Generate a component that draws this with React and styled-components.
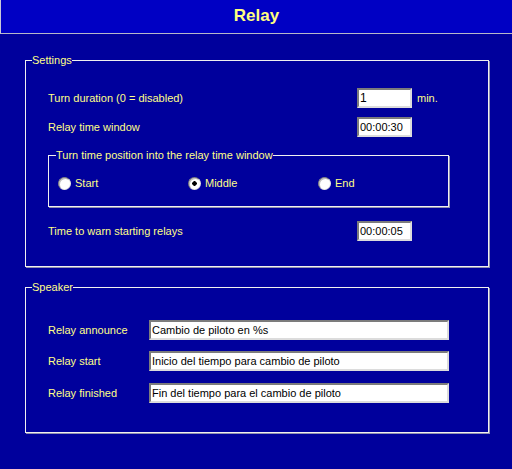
import React from 'react'
import styled, { createGlobalStyle } from 'styled-components'

const GlobalStyle = createGlobalStyle`
    html, body {
        margin: 0;
        padding: 0;
        background: #00009c;
    }
    * {
        box-sizing: border-box;
    }
`

const Page = styled.div`
    width: 512px;
    height: 469px;
    background: #00009c;
    font-family: "Liberation Sans", Arial, sans-serif;
    font-size: 11px;
    color: #ffff88;
    overflow: hidden;
`

const Header = styled.div`
    height: 34px;
    background: #0000c4;
    border-left: 1px solid #c8c8d8;
    border-bottom: 1px solid #b8b8c8;
    display: flex;
    justify-content: center;
    align-items: center;
    padding-bottom: 2px;

    color: #ffff80;
    font-size: 17px;
    font-weight: bold;
`

const Body = styled.div`
    padding: 20px 23px 0 25px;
`

const Group = styled.fieldset`
    margin: ${props => props.top || 0}px 0 0 0;
    padding: ${props => props.pad || '0'};
    width: ${props => props.width ? `${props.width}px` : 'auto'};
    border: 1px solid #f0f0f0;
    box-shadow: 1px 1px 0 #9090b0;
    min-width: 0;
`

const Legend = styled.legend`
    margin-left: ${props => props.offset || 0}px;
    padding: 0;
    font-size: 11px;
    line-height: 13px;
    color: #ffff88;
`

const Row = styled.div`
    display: grid;
    grid-template-columns: ${props => props.label}px ${props => props.field}px auto;
    align-items: center;
    column-gap: 5px;
    margin-top: ${props => props.top || 0}px;
`

const Label = styled.span`
    line-height: 13px;
    padding-top: 1px;
`

const TextBox = styled.div`
    height: 20px;
    background: #fff;
    border-style: solid;
    border-width: 2px;
    border-color: #7c7c7c #dcdcdc #dcdcdc #7c7c7c;
    padding: 0 1px;
    color: #000;
    font-size: ${props => props.big ? 12 : 11}px;
    line-height: 16px;
    white-space: nowrap;
    overflow: hidden;
    grid-column: 2;
`

const Radios = styled.div`
    display: grid;
    grid-template-columns: 130px 130px 130px;
`

const RadioItem = styled.label`
    display: flex;
    align-items: center;
    gap: 4px;
    line-height: 13px;
`

const RadioDot = styled.span`
    width: 13px;
    height: 13px;
    border-radius: 50%;
    border-style: solid;
    border-width: 1px;
    border-color: #808080 #e4e4e4 #e4e4e4 #808080;
    background: ${props => props.checked
        ? 'radial-gradient(circle, #000 0 2px, #fff 2.5px)'
        : '#fff'};
    box-shadow: inset 1px 1px 0 #c0c0c0;
`

const Radio = ({ checked, children }) => (
    <RadioItem>
        <RadioDot checked={checked} />
        {children}
    </RadioItem>
)

export default function App() {
    return (
        <Page>
            <GlobalStyle />
            <Header>Relay</Header>
            <Body>
                <Group pad="21px 22px 25px 22px">
                    <Legend offset={-16}>Settings</Legend>
                    <Row label={304} field={55}>
                        <Label>Turn duration (0 = disabled)</Label>
                        <TextBox big>1</TextBox>
                        <Label>min.</Label>
                    </Row>
                    <Row label={304} field={55} top={9}>
                        <Label>Relay time window</Label>
                        <TextBox>00:00:30</TextBox>
                    </Row>
                    <Group top={12} pad="15px 8px 16px 9px" width={401}>
                        <Legend offset={-2}>Turn time position into the relay time window</Legend>
                        <Radios>
                            <Radio>Start</Radio>
                            <Radio checked>Middle</Radio>
                            <Radio>End</Radio>
                        </Radios>
                    </Group>
                    <Row label={304} field={55} top={14}>
                        <Label>Time to warn starting relays</Label>
                        <TextBox>00:00:05</TextBox>
                    </Row>
                </Group>

                <Group top={14} pad="26px 22px 29px 22px">
                    <Legend offset={-16}>Speaker</Legend>
                    <Row label={96} field={300}>
                        <Label>Relay announce</Label>
                        <TextBox>Cambio de piloto en %s</TextBox>
                    </Row>
                    <Row label={96} field={300} top={11}>
                        <Label>Relay start</Label>
                        <TextBox>Inicio del tiempo para cambio de piloto</TextBox>
                    </Row>
                    <Row label={96} field={300} top={12}>
                        <Label>Relay finished</Label>
                        <TextBox>Fin del tiempo para el cambio de piloto</TextBox>
                    </Row>
                </Group>
            </Body>
        </Page>
    )
}
